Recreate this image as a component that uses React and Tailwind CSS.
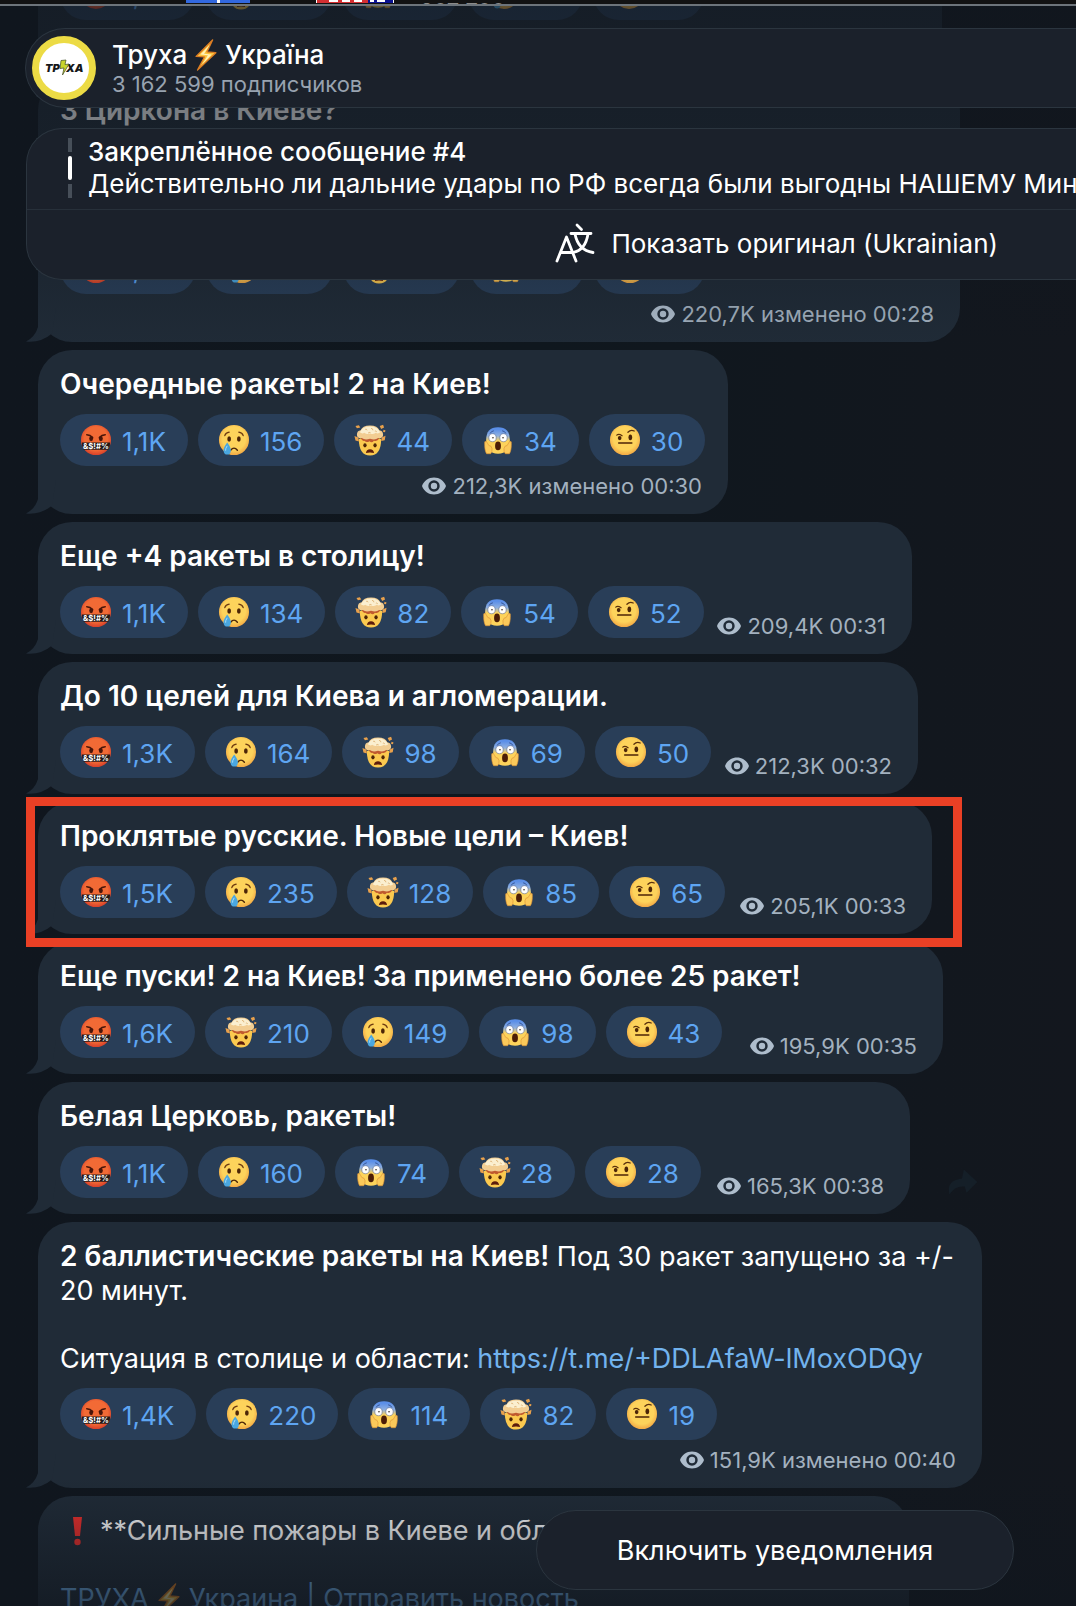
import React from "react";
import { clsx } from "clsx";

const messages = [
  {
    id: 1,
    width: "w-[904px]",
    text: null,
    textClass: "min-h-[34px]",
    reactions: [["rage", "1,2K"], ["mind", "201"], ["scream", "98"], ["cry", "97"], ["brow", "41"]],
    views: "231,4K",
    time: "изменено 00:27",
    below: true,
  },
  {
    id: 2,
    width: "w-[922px]",
    text: <Bold>3 Циркона в Киеве?</Bold>,
    textClass: "min-h-[136px]",
    reactions: [["rage", "1,4K"], ["cry", "182"], ["mind", "94"], ["scream", "76"], ["brow", "61"]],
    views: "220,7K",
    time: "изменено 00:28",
    below: true,
  },
  {
    id: 3,
    width: "w-[690px]",
    text: <Bold>Очередные ракеты! 2 на Киев!</Bold>,
    reactions: [["rage", "1,1K"], ["cry", "156"], ["mind", "44"], ["scream", "34"], ["brow", "30"]],
    views: "212,3K",
    time: "изменено 00:30",
    below: true,
  },
  {
    id: 4,
    width: "w-[874px]",
    text: <Bold>Еще +4 ракеты в столицу!</Bold>,
    reactions: [["rage", "1,1K"], ["cry", "134"], ["mind", "82"], ["scream", "54"], ["brow", "52"]],
    views: "209,4K",
    time: "00:31",
  },
  {
    id: 5,
    width: "w-[880px]",
    text: <Bold>До 10 целей для Киева и агломерации.</Bold>,
    reactions: [["rage", "1,3K"], ["cry", "164"], ["mind", "98"], ["scream", "69"], ["brow", "50"]],
    views: "212,3K",
    time: "00:32",
  },
  {
    id: 6,
    width: "w-[894px]",
    text: <Bold>Проклятые русские. Новые цели – Киев!</Bold>,
    reactions: [["rage", "1,5K"], ["cry", "235"], ["mind", "128"], ["scream", "85"], ["brow", "65"]],
    views: "205,1K",
    time: "00:33",
    marked: true,
  },
  {
    id: 7,
    width: "w-[905px]",
    text: <Bold>Еще пуски! 2 на Киев! За применено более 25 ракет!</Bold>,
    reactions: [["rage", "1,6K"], ["mind", "210"], ["cry", "149"], ["scream", "98"], ["brow", "43"]],
    views: "195,9K",
    time: "00:35",
  },
  {
    id: 8,
    width: "w-[872px]",
    text: <Bold>Белая Церковь, ракеты!</Bold>,
    reactions: [["rage", "1,1K"], ["cry", "160"], ["scream", "74"], ["mind", "28"], ["brow", "28"]],
    views: "165,3K",
    time: "00:38",
  },
  {
    id: 9,
    width: "w-[944px]",
    text: (
      <>
        <Bold>2 баллистические ракеты на Киев!</Bold> Под 30 ракет запущено за +/-
        <br />
        20 минут.
        <br />
        <br />
        Ситуация в столице и области:{" "}
        <a href="https://t.me/+DDLAfaW-lMoxODQy" className="text-[#72b3ee]">
          https://t.me/+DDLAfaW-lMoxODQy
        </a>
      </>
    ),
    reactions: [["rage", "1,4K"], ["cry", "220"], ["scream", "114"], ["mind", "82"], ["brow", "19"]],
    views: "151,9K",
    time: "изменено 00:40",
    below: true,
  },
];

function Bold({ children }) {
  return <b className="text-[28px] leading-none font-semibold">{children}</b>;
}

function Face({ id, color = "#fdd35b" }) {
  return (
    <>
      <defs>
        <radialGradient id={id} cx="50%" cy="45%" r="55%">
          <stop offset="0.7" stopColor={color} />
          <stop offset="1" stopColor={color === "#fdd35b" ? "#f2a945" : "#d8412a"} />
        </radialGradient>
      </defs>
      <circle cx="16" cy="16" r="15.5" fill={`url(#${id})`} />
    </>
  );
}

function Emoji({ name }) {
  return (
    <svg viewBox={name === "scream" ? "-1.5 -1.5 35 35" : "-0.5 -0.5 33 33"} className="size-8 shrink-0" aria-hidden="true">
      {name === "rage" && (
        <>
          <Face id="face-rage" color="#f26a35" />
          <path d="M6.5 10.5q3.5 0 6 3M25.500 10.500q-3.500 0-6 3" stroke="#4a1509" strokeWidth="1.6" fill="none" strokeLinecap="round" />
          <ellipse cx="11" cy="14.500" rx="2" ry="2.700" fill="#4a1509" />
          <ellipse cx="21" cy="14.500" rx="2" ry="2.700" fill="#4a1509" />
          <path d="M1.500 18.500h29q.3 4-1.800 7.500H3.300Q1.200 22.500 1.500 18.500z" fill="#231a18" />
          <text x="16" y="25.300" textAnchor="middle" fontSize="8" fontWeight="700" fontFamily="Inter, sans-serif" fill="#fff">
            &amp;$!#%
          </text>
        </>
      )}
      {name === "cry" && (
        <>
          <Face id="face-cry" />
          <path d="M6.500 11.500q1-3 4.500-3.500M25.500 11.500q-1-3-4.500-3.500" stroke="#6e3a10" strokeWidth="1.300" fill="none" strokeLinecap="round" />
          <ellipse cx="11" cy="15" rx="1.900" ry="2.900" fill="#4c2507" />
          <ellipse cx="21" cy="15" rx="1.900" ry="2.900" fill="#4c2507" />
          <path d="M12.500 26.500q3.500-4.200 7 0" stroke="#4c2507" strokeWidth="1.500" fill="none" strokeLinecap="round" />
          <path d="M9 18.500q4.200 5.500 3.800 8.500-.5 4-3.800 4t-3.800-4q-.4-3 3.800-8.500z" fill="#4aa7e0" />
          <path d="M9 22q-2 3-1.700 5" stroke="#a9dcf7" strokeWidth="1" fill="none" />
        </>
      )}
      {name === "mind" && (
        <>
          <path d="M4.500 15q0 17 11.500 17t11.500-17q-5.500-2.500-11.500-2.500T4.500 15z" fill="#fbc94f" />
          <path d="M6.500 14.500q2-3 9.500-3t9.500 3q-2 3.500-5.500 2.200-2 2.800-4.500.6-3.500 2-5-.6-2 1-4-2.200z" fill="#c05a2f" />
          <path d="M2.500 10.500q0-4 4-4.500Q8 1 16 1t9.500 5q4 .5 4 4.500 0 4-5 3.500-3.500 2.500-8.500.6-5 1.900-8.500-.6-5 .5-5-3.500z" fill="#f2cd92" />
          <path d="M5.500 8Q8 2 16 2t10.500 6q-2 2-4.500.6-2 2-6 .6-4 1.400-6-.6-2 1.400-4.500-.6z" fill="#fbefd0" />
          <path d="M11 5q1.500-.8 2 1M17 4q2 0 2 2M21 7q1-.8 2 .6M14 9q1-1.300 2.500-.6" stroke="#d9a968" strokeWidth=".8" fill="none" />
          <path d="M1 1.500l3.500-.8 1.500 2.300-3.500 1zM26 1.500l3.500-1.200 1 2.700-3 1.700zM0 12l4 1.500.6 4-3.600-1zM32 11.500l-4 2-.4 3.500 3.600-.7zM30 5.500l2 .6-.6 2-2-.6z" fill="#e9a14c" />
          <ellipse cx="10.800" cy="21.500" rx="1.700" ry="2.200" fill="#4c2507" />
          <ellipse cx="21.200" cy="21.500" rx="1.700" ry="2.200" fill="#4c2507" />
          <path d="M11.800 29.500q.4-4 4.200-4t4.200 4q-4.200-1.400-8.400 0z" fill="#5c1c0c" />
        </>
      )}
      {name === "scream" && (
        <>
          <defs>
            <linearGradient id="face-scream" x1="0" y1="0" x2="0" y2="1">
              <stop offset="0.08" stopColor="#5b8fe8" />
              <stop offset="0.32" stopColor="#8fb0e0" />
              <stop offset="0.52" stopColor="#fdd35b" />
            </linearGradient>
          </defs>
          <path d="M16 2q-13 0-13 14 0 15 13 15t13-15Q29 2 16 2z" fill="url(#face-scream)" />
          <path d="M7.500 8.500q1-2.200 3.500-2.500M24.500 8.500q-1-2.200-3.500-2.500" stroke="#2f4f93" strokeWidth="1" fill="none" strokeLinecap="round" />
          <ellipse cx="10" cy="13.500" rx="4" ry="4.400" fill="#fff" stroke="#52618a" strokeWidth=".6" />
          <ellipse cx="22" cy="13.500" rx="4" ry="4.400" fill="#fff" stroke="#52618a" strokeWidth=".6" />
          <circle cx="10.500" cy="13.500" r=".9" fill="#3b2a1c" />
          <circle cx="21.500" cy="13.500" r=".9" fill="#3b2a1c" />
          <ellipse cx="16" cy="22.500" rx="3.200" ry="4.800" fill="#4c1d06" />
          <path d="M1.500 18q2-1.500 3 1.500l1.500 2.500q3 0 3.500 3.500.3 3.500-1.500 5.500H3.500Q1 27 1.500 18zM30.500 18q-2-1.500-3 1.500L26 22q-3 0-3.500 3.500-.3 3.500 1.500 5.500h4.500Q31 27 30.500 18z" fill="#fbc95a" stroke="#dd9236" strokeWidth=".7" />
        </>
      )}
      {name === "brow" && (
        <>
          <Face id="face-brow" />
          <path d="M7.500 11q2-1.800 5.500.6M19 8q3-3.200 6.500-1.300" stroke="#5b300c" strokeWidth="1.300" fill="none" strokeLinecap="round" />
          <ellipse cx="10.500" cy="14" rx="1.900" ry="2.200" fill="#4c2507" />
          <ellipse cx="21.500" cy="13.200" rx="1.900" ry="3" fill="#4c2507" />
          <path d="M9.500 19h13.500" stroke="#4c2507" strokeWidth="1.600" strokeLinecap="round" />
        </>
      )}
    </svg>
  );
}

function Bolt({ className }) {
  return (
    <svg viewBox="0 0 24 34" className={className} aria-hidden="true">
      <path d="M19 1L1.500 18.500l9 .5L3 33l19.500-18.500-9.500-.8z" fill="#fbc53d" stroke="#dc7d24" strokeWidth="1.400" strokeLinejoin="round" />
      <path d="M16 6L6 16.500l8 .8L8 27l10-10.500-8-.9z" fill="#fff3b8" />
    </svg>
  );
}

function Eye() {
  return (
    <svg viewBox="0 0 24 18" className="h-[18px] w-6 shrink-0" aria-hidden="true">
      <path
        fillRule="evenodd"
        fill="#aebdcc"
        d="M12 0.500C6.500 0.500 2 3.700 0 9c2 5.300 6.500 8.500 12 8.500S22 14.300 24 9C22 3.700 17.500 0.500 12 0.500zm0 14.200a5.700 5.700 0 1 1 0-11.400 5.700 5.700 0 0 1 0 11.400z"
      />
      <circle cx="12" cy="9" r="3.200" fill="#aebdcc" />
    </svg>
  );
}

function Meta({ views, time, className }) {
  return (
    <div className={clsx("flex items-center gap-[6px] text-[22px] leading-6 whitespace-nowrap text-[#a3b1bf]", className)}>
      <Eye />
      <span>
        {views} {time}
      </span>
    </div>
  );
}

function Bubble({ width, text, textClass, reactions, views, time, below, marked }) {
  return (
    <article className={clsx("relative max-w-full rounded-[34px] bg-[#202b37] px-[22px] pt-[18px] pb-4", width)}>
      <svg viewBox="0 0 34 34" className="absolute bottom-0 -left-3 size-[34px]" aria-hidden="true">
        <path d="M12 0v19Q9 29 0 33.500q15 1.500 26-8L30 0z" fill="#202b37" />
      </svg>
      <div className={clsx("relative text-[27px] leading-[34px] whitespace-nowrap text-white", textClass)}>{text}</div>
      <div className="relative mt-3 flex items-end gap-[10px]">
        {reactions.map(([name, count]) => (
          <button key={name} className="flex h-[52px] items-center gap-[10px] rounded-full bg-[#293e58] pr-[22px] pl-5 text-[26px] text-[#5ea5f2]">
            <Emoji name={name} />
            <span className="pt-[2px]">{count}</span>
          </button>
        ))}
        {!below && <Meta views={views} time={time} className="mr-1 ml-auto" />}
      </div>
      {below && <Meta views={views} time={time} className="mt-2 mr-1 justify-end" />}
      {marked && <div className="pointer-events-none absolute -top-[5px] -right-[30px] -bottom-[13px] -left-3 z-10 border-[9px] border-[#ea4025]" />}
    </article>
  );
}

function Header() {
  return (
    <header className="ml-[25px] flex h-20 items-center gap-4 rounded-l-full border border-r-0 border-[#2b353f] bg-[#1b212b] pl-[6px]">
      <div className="flex size-16 items-center justify-center rounded-full border-[7px] border-[#ecdb45] bg-white">
        <svg viewBox="0 0 50 20" className="h-5 w-[50px] overflow-visible" aria-hidden="true">
          <g fontFamily="Inter, sans-serif" fontSize="11" fontWeight="900" fontStyle="italic" fill="#16181a">
            <text x="6" y="14">ТР</text>
            <text x="27" y="14">ХА</text>
          </g>
          <path d="M22 2.500l5-.5-1 4.500 4-.5-6.500 11 1.500-7-4 .5z" fill="#c8d42c" stroke="#3d4a22" strokeWidth=".7" />
        </svg>
      </div>
      <div>
        <h1 className="flex items-center text-[26px] leading-8 font-medium text-white">
          Труха
          <Bolt className="mx-[7px] h-8 w-6" />
          Україна
        </h1>
        <p className="text-[22px] leading-[26px] text-[#98a3b0]">3 162 599 подписчиков</p>
      </div>
    </header>
  );
}

function Pinned() {
  return (
    <section className="mt-5 ml-[26px] overflow-hidden rounded-l-[36px] border border-r-0 border-[#2b353f] bg-[#1b212b] text-[26px] whitespace-nowrap text-white">
      <div className="flex h-[81px] gap-4 border-b border-[#27303a] pt-[7px] pl-[41px]">
        <div className="flex flex-col gap-1 pt-[2px]">
          <span className="h-[14px] w-1 bg-[#474f59]" />
          <span className="h-6 w-1 rounded-full bg-white" />
          <span className="h-[14px] w-1 bg-[#474f59]" />
        </div>
        <div className="leading-8">
          <h2 className="font-medium">Закреплённое сообщение #4</h2>
          <p>Действительно ли дальние удары по РФ всегда были выгодны НАШЕМУ Министерству</p>
        </div>
      </div>
      <button className="flex h-[69px] w-full items-center justify-end gap-4 pr-[78px] pb-[3px]">
        <svg viewBox="0 0 40 40" className="size-10 shrink-0" fill="none" stroke="#fff" strokeWidth="2.800" strokeLinecap="round" strokeLinejoin="round" aria-hidden="true">
          <path d="M2 38L11.500 14 21 38M6 29.500h12" />
          <path d="M16 10.500h20M22 2l4.500 4.500M20 11q3 16 18 18.500M33 11q-2.500 16-15 18.500" />
        </svg>
        <span>Показать оригинал (Ukrainian)</span>
      </button>
    </section>
  );
}

export default function App() {
  return (
    <div className="relative flex h-screen flex-col overflow-hidden bg-linear-to-r from-[#10161e] via-[#0f171e] to-[#13171e] font-['Inter','Liberation_Sans',sans-serif]">
      <div className="relative z-20 flex h-[6px] shrink-0 overflow-hidden border-b-2 border-[#6d747b] bg-[#121213] pl-[186px]">
        <span className="flex h-[3px] w-16 justify-center bg-[#3268df]">
          <i className="w-[3px] bg-white" />
        </span>
        <span className="ml-[66px] flex h-[3px] w-[52px] items-start gap-1 border-l border-white bg-[#d42f32] pl-3">
          <i className="h-[2px] w-[9px] bg-white" />
          <i className="h-[2px] w-2 bg-white" />
          <i className="h-[2px] w-2 bg-white" />
        </span>
        <span className="flex h-[3px] w-[26px] gap-[3px] border-r border-white bg-[#0a1190] pl-[2px]">
          <i className="h-[2px] w-1 bg-white" />
          <i className="h-[2px] w-2 bg-white" />
        </span>
        <span className="ml-[26px] h-1 overflow-hidden text-[22px] leading-[22px] text-[#8a8a8a]">207 700</span>
      </div>

      <main className="min-h-0 flex-1 overflow-hidden">
        <div className="-mt-[102px] flex flex-col items-start gap-2 pr-4 pl-[38px]">
          {messages.map((m) => (
            <Bubble key={m.id} {...m} />
          ))}
          <article className="h-[200px] w-[871px] rounded-t-[34px] bg-[#202b37] px-[22px] pt-[18px] text-[27px] leading-[34px] text-white">
            <p className="flex items-center">
              <svg viewBox="0 0 38 34" className="mr-[2px] h-[34px] w-[38px]" aria-hidden="true">
                <path d="M13 3h9l-2 19h-5z" fill="#ef2f2c" />
                <circle cx="17.500" cy="28" r="3.200" fill="#ef2f2c" />
              </svg>
              **Сильные пожары в Киеве и области
            </p>
            <p className="mt-[34px] flex items-center text-[#72b3ee]">
              <a href="#channel" className="flex items-center">
                ТРУХА
                <Bolt className="mx-2 h-8 w-6" />
                Украина
              </a>
              <span className="mx-2">|</span>
              <a href="#news">Отправить новость</a>
            </p>
          </article>
        </div>
      </main>

      <svg viewBox="0 0 40 40" className="absolute top-[1164px] right-[96px] size-9" aria-hidden="true">
        <path d="M6 34Q2 18 20 16L22 6l15 14-12 12-2-7Q12 24 6 34z" fill="#151f28" />
      </svg>
      <div className="pointer-events-none absolute inset-x-0 top-[6px] h-[340px] bg-linear-to-b from-[#10161e]/65 via-[#10161e]/50 to-transparent" />
      <div className="pointer-events-none absolute inset-x-0 bottom-0 h-32 bg-linear-to-t from-[#10161e]/70 to-transparent" />

      <div className="absolute inset-x-0 top-7">
        <Header />
        <Pinned />
      </div>
      <button className="absolute right-[62px] bottom-4 h-20 w-[478px] rounded-full border border-[#2b353f] bg-[#1b212b] pt-[2px] text-[27px] text-white">
        Включить уведомления
      </button>
    </div>
  );
}
